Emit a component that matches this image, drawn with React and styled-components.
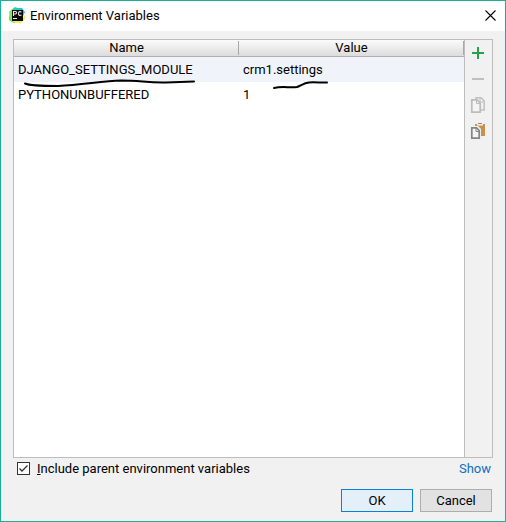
import { useState } from 'react'
import styled, { createGlobalStyle } from 'styled-components'

const GlobalStyle = createGlobalStyle`
    * {
        box-sizing:border-box;
    }
    body {
        margin:0;
        font-family:Roboto, 'Open Sans', sans-serif;
        font-size:13px;
        color:#000;
    }
    button, input {
        font:inherit;
        color:inherit;
    }
`
const Window = styled.div`
    display:flex;
    flex-direction:column;
    min-height:100vh;
    background:#f1f1f1;
    border:1px solid #1aad98;
`
const TitleBar = styled.header`
    display:flex;
    align-items:center;
    gap:4px;
    height:30px;
    padding:0 9px 2px 8px;
    background:#fff;
`
const Title = styled.h1`
    flex:1;
    margin:0;
    font-size:13px;
    font-weight:400;
`
const IconButton = styled.button`
    display:flex;
    padding:0;
    border:none;
    background:none;
`
const Content = styled.main`
    flex:1;
    display:flex;
    flex-direction:column;
    padding:8px 12px 9px;
`
const Panel = styled.section`
    flex:1;
    display:flex;
    border:1px solid #bdbdbd;
`
const TableArea = styled.div`
    flex:1;
    position:relative;
    background:#fff;
`
const Table = styled.table`
    width:100%;
    table-layout:fixed;
    border-collapse:separate;
    border-spacing:0;
`
const HeadCell = styled.th`
    position:relative;
    height:17px;
    padding:0;
    border-bottom:1px solid #b0b0b0;
    background:linear-gradient(#fbfbfb, #dcdcdc);
    font-weight:400;
    line-height:16px;

    &::after {
        content:'';
        position:absolute;
        top:1px;
        bottom:1px;
        right:0;
        width:1px;
        background:#a8a8a8;
    }
`
const Row = styled.tr`
    background:${props => props.$selected ? '#f0f4fa' : '#fff'};
`
const Cell = styled.td`
    height:25px;
    padding:0 4px;
    line-height:24px;
`
const Toolbar = styled.div`
    display:flex;
    flex-direction:column;
    align-items:center;
    gap:10px;
    width:28px;
    padding:5px 1px 0 0;
    border-left:1px solid #bdbdbd;
`
const Mark = styled.svg`
    position:absolute;
    left:${props => props.$left}px;
    top:${props => props.$top}px;
    pointer-events:none;
`
const Options = styled.div`
    display:flex;
    justify-content:space-between;
    align-items:center;
    height:20px;
    padding:0 2px 0 4px;
`
const CheckLabel = styled.label`
    display:flex;
    align-items:center;
    gap:7px;
`
const Checkbox = styled.input`
    appearance:none;
    width:13px;
    height:13px;
    margin:0;
    border:1px solid #333;
    background:#fff;

    &:checked {
        background:#fff url("data:image/svg+xml,%3Csvg xmlns='http://www.w3.org/2000/svg' viewBox='0 0 11 11'%3E%3Cpath d='M1.5 5.5L4 8L9.5 2.5' fill='none' stroke='%23333' stroke-width='1.3'/%3E%3C/svg%3E");
    }
`
const ShowLink = styled.a`
    color:#0f6fc0;
    text-decoration:none;
`
const ButtonGroup = styled.div`
    display:flex;
    justify-content:flex-end;
    gap:7px;
    padding:11px 1px 0 0;
`
const Button = styled.button`
    width:72px;
    height:23px;
    padding:0;
    border:1px solid ${props => props.$primary ? '#0a80d8' : '#adadad'};
    background:${props => props.$primary ? '#e3f0fa' : '#e2e2e2'};
    line-height:20px;
`

const variables = [
    { name: 'DJANGO_SETTINGS_MODULE', value: 'crm1.settings' },
    { name: 'PYTHONUNBUFFERED', value: '1' },
]

const AppLogo = () => (
    <svg width="17" height="17" viewBox="0 0 17 17" aria-hidden="true">
        <path d="M1 4L6 0L11 2L15 5L12 16L5 16L0 13Z" fill="#2bd39b"/>
        <path d="M8 1L13 1L16 5L14 9L8 7Z" fill="#20c6dc"/>
        <path d="M0 5L4 2L5 12L9 16L2 15Z" fill="#8ee34e"/>
        <path d="M4 14L12 13L16 8L16 12L12 16L6 16Z" fill="#f0ee58"/>
        <rect x="3" y="3" width="11" height="11" fill="#0b0b0b"/>
        <path d="M4.5 9V4.5H6.5Q7.5 4.5 7.5 5.7T6.5 7H4.5M12.5 5Q9.5 3.8 9.5 6.5T12.5 8" fill="none" stroke="#e8e8e8" strokeWidth="1.1"/>
        <path d="M4 11.5H8" stroke="#eee"/>
    </svg>
)

const CloseIcon = () => (
    <svg width="11" height="11" viewBox="0 0 11 11" aria-hidden="true">
        <path d="M0.5 0.5L10.5 10.5M10.5 0.5L0.5 10.5" stroke="#000" strokeWidth="1.1"/>
    </svg>
)

const AddIcon = () => (
    <svg width="16" height="16" viewBox="0 0 16 16" aria-hidden="true">
        <path d="M2 8H14M8 2V14" stroke="#28a04a" strokeWidth="2"/>
    </svg>
)

const RemoveIcon = () => (
    <svg width="16" height="16" viewBox="0 0 16 16" aria-hidden="true">
        <path d="M2 8H14" stroke="#bfbfbf" strokeWidth="2"/>
    </svg>
)

const CopyIcon = () => (
    <svg width="16" height="16" viewBox="0 0 16 16" aria-hidden="true">
        <path d="M6 2V0.7H11L14.2 4V13H11" fill="none" stroke="#c0c0c0" strokeWidth="1.5"/>
        <path d="M10 1V5H14" fill="none" stroke="#c0c0c0"/>
        <path d="M1.8 2.8H7L10.2 6V15.2H1.8Z" fill="#f4f4f4" stroke="#bcbcbc" strokeWidth="1.7"/>
        <path d="M6.5 3V6.5H10" fill="none" stroke="#bcbcbc"/>
    </svg>
)

const PasteIcon = () => (
    <svg width="16" height="16" viewBox="0 0 16 16" aria-hidden="true">
        <path d="M5 1H15V13H11V6L8 3H5Z" fill="#c9924a"/>
        <path d="M7 2.5H13V1H12V0H8V1H7Z" fill="#f1f1f1"/>
        <path d="M8 0.5H12" stroke="#888"/>
        <path d="M0 3H7.5L11 6.5V16H0Z" fill="#f1f1f1"/>
        <path d="M1.8 4.8H6.5L9.2 7.5V15.2H1.8Z" fill="#f4f4f4" stroke="#858585" strokeWidth="1.7"/>
        <path d="M6 5V8.5H9" fill="none" stroke="#858585"/>
    </svg>
)

const VariablesTable = () => (
    <TableArea>
        <Table>
            <thead>
                <tr>
                    <HeadCell scope="col">Name</HeadCell>
                    <HeadCell scope="col">Value</HeadCell>
                </tr>
            </thead>
            <tbody>
                {variables.map((variable, index) => (
                    <Row key={variable.name} $selected={index === 0}>
                        <Cell>{variable.name}</Cell>
                        <Cell>{variable.value}</Cell>
                    </Row>
                ))}
            </tbody>
        </Table>
        <Mark $left={8} $top={38} width="176" height="10" viewBox="0 0 176 10">
            <path d="M3 5.5C8 8 22 8 36 8C60 7 80 3 99 2.5C118 2.5 126 5 144 4.5L172 3.5" fill="none" stroke="#000" strokeWidth="2" strokeLinecap="round"/>
        </Mark>
        <Mark $left={256} $top={38} width="62" height="12" viewBox="0 0 62 12">
            <path d="M4 10C12 8 20 10 27 9C32 7 34 5 39 4.5C46 4 52 5 57 4.5" fill="none" stroke="#000" strokeWidth="2" strokeLinecap="round"/>
        </Mark>
    </TableArea>
)

const App = () => {
    const [includeParent, setIncludeParent] = useState(true)

    return (
        <>
            <GlobalStyle/>
            <Window>
                <TitleBar>
                    <AppLogo/>
                    <Title>Environment Variables</Title>
                    <IconButton type="button" aria-label="Close"><CloseIcon/></IconButton>
                </TitleBar>
                <Content>
                    <Panel>
                        <VariablesTable/>
                        <Toolbar>
                            <IconButton type="button" aria-label="Add"><AddIcon/></IconButton>
                            <IconButton type="button" aria-label="Remove" disabled><RemoveIcon/></IconButton>
                            <IconButton type="button" aria-label="Copy" disabled><CopyIcon/></IconButton>
                            <IconButton type="button" aria-label="Paste"><PasteIcon/></IconButton>
                        </Toolbar>
                    </Panel>
                    <Options>
                        <CheckLabel>
                            <Checkbox
                                type="checkbox"
                                checked={includeParent}
                                onChange={() => setIncludeParent(!includeParent)}
                            />
                            <span><u>I</u>nclude parent environment variables</span>
                        </CheckLabel>
                        <ShowLink href="#show">Show</ShowLink>
                    </Options>
                    <ButtonGroup>
                        <Button type="button" $primary>OK</Button>
                        <Button type="button">Cancel</Button>
                    </ButtonGroup>
                </Content>
            </Window>
        </>
    )
}
export default App
